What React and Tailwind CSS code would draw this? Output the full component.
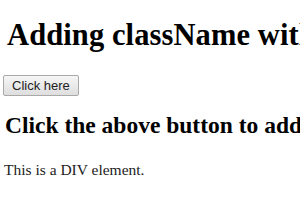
export default function App() {
  return (
    <div className="w-[300px] h-[210px] overflow-hidden bg-white px-[6px] font-['Liberation_Serif',serif] text-black">
      {/* heading */}
      <h1 className="pt-[18px] ml-[1px] text-[30.5px] leading-[34px] font-bold tracking-[0.1px] whitespace-nowrap">
        Adding className with React
      </h1>

      <div className="mt-[23px] flex">
        <button className="-ml-[3px] h-[21px] px-[8px] border border-[#a9a9a9] rounded-[2px] bg-gradient-to-b from-[#f6f6f6] to-[#dedede] font-['Liberation_Sans',Arial,sans-serif] text-[13px] leading-[19px] text-[#222]">
          Click here
        </button>
      </div>

      <h2 className="mt-[16px] -ml-[1px] text-[23.5px] leading-[27px] font-bold whitespace-nowrap">
        Click the above button to add a class
      </h2>

      <p className="mt-[22px] -ml-[2px] text-[15.5px] leading-[18px] text-[#222] whitespace-nowrap">
        This is a DIV element.
      </p>
    </div>
  );
}
